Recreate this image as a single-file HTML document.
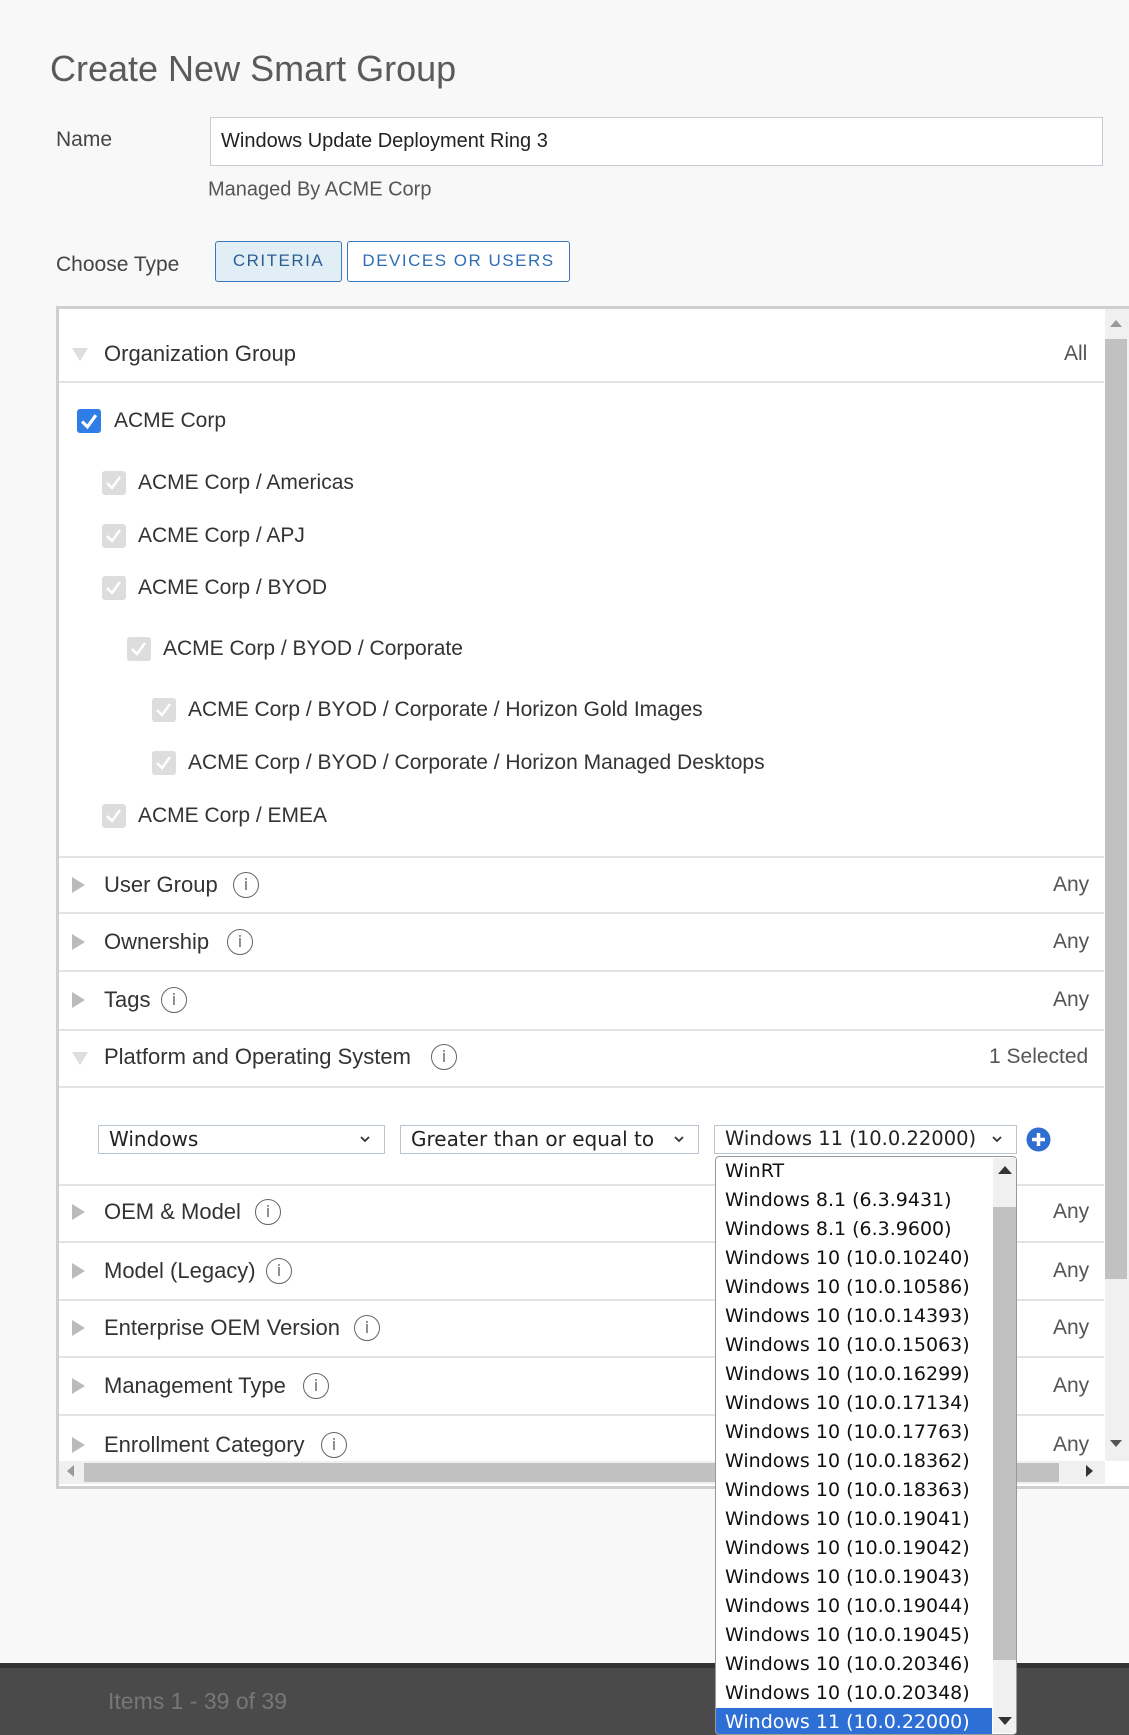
<!DOCTYPE html>
<html><head><style>
*{box-sizing:border-box;margin:0;padding:0}
body{width:1129px;height:1735px;background:#f8f8f8;font-family:"Liberation Sans",sans-serif;color:#333;position:relative;overflow:hidden}
.a{position:absolute;white-space:nowrap}
.lbl{font-size:21px;color:#444;transform:translateY(-50%)}
.row{font-size:21px;color:#333;transform:translateY(-50%)}
.hd{font-size:22px;color:#333;transform:translateY(-50%)}
.any{font-size:21px;color:#555;transform:translateY(-50%);right:0}
.sep{position:absolute;left:59px;width:1045px;height:2px;background:#e3e3e3}
.cb{position:absolute;width:24px;height:24px;background:#ddd;border-radius:3px}
.cb svg{position:absolute;left:3px;top:3px}
.tri{position:absolute;width:0;height:0;border-top:8px solid transparent;border-bottom:8px solid transparent;border-left:13px solid #bbb}
.info{position:absolute;width:26px;height:26px;border:1.5px solid #666;border-radius:50%;font-size:16px;text-align:center;line-height:23px;color:#666;font-family:"DejaVu Sans",sans-serif}
.sel{position:absolute;height:29px;border:1.5px solid #b8c4d0;background:#fff;font-size:20px;line-height:26px;padding-left:10px;color:#222;font-family:"DejaVu Sans",sans-serif}
.sel svg{position:absolute;right:14px;top:10px}
.dd div{height:29px;line-height:29px;padding-left:9px;font-family:"DejaVu Sans",sans-serif;font-size:19px;color:#111}
</style></head><body>
<div class="a" style="left:50px;top:48px;font-size:36px;color:#5a5a5a">Create New Smart Group</div>
<div class="a lbl" style="left:56px;top:140px">Name</div>
<div class="a" style="left:210px;top:117px;width:893px;height:49px;border:1.5px solid #c6ccd4;background:#fff;font-size:20px;line-height:46px;padding-left:10px;color:#222">Windows Update Deployment Ring 3</div>
<div class="a lbl" style="left:208px;top:190px;color:#555;font-size:20px">Managed By ACME Corp</div>
<div class="a lbl" style="left:56px;top:265px">Choose Type</div>
<div class="a" style="left:215px;top:241px;width:127px;height:41px;border:1.5px solid #3a78c2;border-radius:3px;background:#e1eef6;color:#2b5e93;font-size:17px;letter-spacing:1.5px;text-align:center;line-height:38px">CRITERIA</div>
<div class="a" style="left:347px;top:241px;width:223px;height:41px;border:1.5px solid #3a78c2;border-radius:3px;background:#fff;color:#2f6db5;font-size:17px;letter-spacing:1.5px;text-align:center;line-height:38px">DEVICES OR USERS</div>
<!-- panel -->
<div class="a" style="left:56px;top:306px;width:1073px;height:1183px;border:3px solid #cfcfcf;border-right:none;background:#fff"></div>
<div class="a" style="left:1105px;top:309px;width:24px;height:1152px;background:#f0f0f0"></div>
<div class="a" style="left:1105px;top:339px;width:22px;height:940px;background:#c1c1c1"></div>
<div class="a" style="left:1110px;top:320px;border-left:6px solid transparent;border-right:6px solid transparent;border-bottom:7px solid #999;width:0"></div>
<div class="a" style="left:1110px;top:1440px;border-left:6px solid transparent;border-right:6px solid transparent;border-top:7px solid #555;width:0"></div>
<div class="a" style="left:59px;top:1461px;width:1046px;height:23px;background:#f0f0f0"></div>
<div class="a" style="left:84px;top:1463px;width:975px;height:19px;background:#c1c1c1"></div>
<div class="a" style="left:67px;top:1465px;border-top:6px solid transparent;border-bottom:6px solid transparent;border-right:7px solid #999;width:0"></div>
<div class="a" style="left:1086px;top:1465px;border-top:6px solid transparent;border-bottom:6px solid transparent;border-left:7px solid #333;width:0"></div>

<div class="a" style="left:72px;top:348px;border-left:8px solid transparent;border-right:8px solid transparent;border-top:13px solid #ddd;width:0"></div>
<div class="a hd" style="left:104px;top:354px">Organization Group</div>
<div class="a any" style="left:1064px;top:354px">All</div>
<div class="sep" style="top:381px"></div>
<div class="cb" style="left:77px;top:409px;background:#2f7ee8"><svg width="18" height="18" viewBox="0 0 17 17"><path d="M2 9 L7 14 L15 3" stroke="#fff" stroke-width="3" fill="none"/></svg></div>
<div class="a row" style="left:114px;top:421px">ACME Corp</div>

<div class="cb" style="left:102px;top:471px"><svg width="18" height="18"><path d="M2 9 L7 14 L15 3" stroke="#fff" stroke-width="2.5" fill="none"/></svg></div>
<div class="a row" style="left:138px;top:483px">ACME Corp / Americas</div>
<div class="cb" style="left:102px;top:524px"><svg width="18" height="18"><path d="M2 9 L7 14 L15 3" stroke="#fff" stroke-width="2.5" fill="none"/></svg></div>
<div class="a row" style="left:138px;top:536px">ACME Corp / APJ</div>
<div class="cb" style="left:102px;top:576px"><svg width="18" height="18"><path d="M2 9 L7 14 L15 3" stroke="#fff" stroke-width="2.5" fill="none"/></svg></div>
<div class="a row" style="left:138px;top:588px">ACME Corp / BYOD</div>
<div class="cb" style="left:127px;top:637px"><svg width="18" height="18"><path d="M2 9 L7 14 L15 3" stroke="#fff" stroke-width="2.5" fill="none"/></svg></div>
<div class="a row" style="left:163px;top:649px">ACME Corp / BYOD / Corporate</div>
<div class="cb" style="left:152px;top:698px"><svg width="18" height="18"><path d="M2 9 L7 14 L15 3" stroke="#fff" stroke-width="2.5" fill="none"/></svg></div>
<div class="a row" style="left:188px;top:710px">ACME Corp / BYOD / Corporate / Horizon Gold Images</div>
<div class="cb" style="left:152px;top:751px"><svg width="18" height="18"><path d="M2 9 L7 14 L15 3" stroke="#fff" stroke-width="2.5" fill="none"/></svg></div>
<div class="a row" style="left:188px;top:763px">ACME Corp / BYOD / Corporate / Horizon Managed Desktops</div>
<div class="cb" style="left:102px;top:804px"><svg width="18" height="18"><path d="M2 9 L7 14 L15 3" stroke="#fff" stroke-width="2.5" fill="none"/></svg></div>
<div class="a row" style="left:138px;top:816px">ACME Corp / EMEA</div>
<div class="sep" style="top:856px"></div>

<div class="tri" style="left:72px;top:877px"></div><div class="a hd" style="left:104px;top:885px">User Group</div><div class="info" style="left:233px;top:872px">i</div><div class="a any" style="left:1053px;top:885px">Any</div>
<div class="sep" style="top:912px"></div>
<div class="tri" style="left:72px;top:934px"></div><div class="a hd" style="left:104px;top:942px">Ownership</div><div class="info" style="left:227px;top:929px">i</div><div class="a any" style="left:1053px;top:942px">Any</div>
<div class="sep" style="top:970px"></div>
<div class="tri" style="left:72px;top:992px"></div><div class="a hd" style="left:104px;top:1000px">Tags</div><div class="info" style="left:161px;top:987px">i</div><div class="a any" style="left:1053px;top:1000px">Any</div>
<div class="sep" style="top:1029px"></div>
<div class="a" style="left:72px;top:1052px;border-left:8px solid transparent;border-right:8px solid transparent;border-top:13px solid #ddd;width:0"></div>
<div class="a hd" style="left:104px;top:1057px">Platform and Operating System</div><div class="info" style="left:431px;top:1044px">i</div><div class="a any" style="left:989px;top:1057px">1 Selected</div>
<div class="sep" style="top:1086px"></div>

<div class="sel" style="left:98px;top:1125px;width:287px">Windows<svg width="10" height="7"><path d="M1 1l4 4 4-4" stroke="#333" stroke-width="1.8" fill="none"/></svg></div>
<div class="sel" style="left:400px;top:1125px;width:299px">Greater than or equal to<svg width="10" height="7"><path d="M1 1l4 4 4-4" stroke="#333" stroke-width="1.8" fill="none"/></svg></div>
<div class="sel" style="left:714px;top:1125px;width:303px;font-size:19.5px">Windows 11 (10.0.22000)<svg width="10" height="7"><path d="M1 1l4 4 4-4" stroke="#333" stroke-width="1.8" fill="none"/></svg></div>
<svg class="a" style="left:1026px;top:1127px" width="25" height="25"><circle cx="12.5" cy="12.5" r="12" fill="#2f6fd0"/><path d="M12.5 6v13M6 12.5h13" stroke="#fff" stroke-width="3.5"/></svg>
<div class="sep" style="top:1184px"></div>

<div class="tri" style="left:72px;top:1204px"></div><div class="a hd" style="left:104px;top:1212px">OEM &amp; Model</div><div class="info" style="left:255px;top:1199px">i</div><div class="a any" style="left:1053px;top:1212px">Any</div>
<div class="sep" style="top:1241px"></div>
<div class="tri" style="left:72px;top:1263px"></div><div class="a hd" style="left:104px;top:1271px">Model (Legacy)</div><div class="info" style="left:266px;top:1258px">i</div><div class="a any" style="left:1053px;top:1271px">Any</div>
<div class="sep" style="top:1299px"></div>
<div class="tri" style="left:72px;top:1320px"></div><div class="a hd" style="left:104px;top:1328px">Enterprise OEM Version</div><div class="info" style="left:354px;top:1315px">i</div><div class="a any" style="left:1053px;top:1328px">Any</div>
<div class="sep" style="top:1356px"></div>
<div class="tri" style="left:72px;top:1378px"></div><div class="a hd" style="left:104px;top:1386px">Management Type</div><div class="info" style="left:303px;top:1373px">i</div><div class="a any" style="left:1053px;top:1386px">Any</div>
<div class="sep" style="top:1414px"></div>
<div class="tri" style="left:72px;top:1437px"></div><div class="a hd" style="left:104px;top:1445px">Enrollment Category</div><div class="info" style="left:321px;top:1432px">i</div><div class="a any" style="left:1053px;top:1445px">Any</div>

<!-- footer -->
<div class="a" style="left:0;top:1663px;width:1129px;height:72px;background:#4a4a4a"></div>
<div class="a" style="left:0;top:1663px;width:1129px;height:5px;background:#333"></div>
<div class="a" style="left:108px;top:1688px;font-size:23px;color:#777">Items 1 - 39 of 39</div>

<!-- dropdown -->
<div class="a dd" style="left:715px;top:1156px;width:302px;height:579px;background:#fff;border:1.5px solid #999;border-radius:4px;overflow:hidden">
<div>WinRT</div><div>Windows 8.1 (6.3.9431)</div><div>Windows 8.1 (6.3.9600)</div><div>Windows 10 (10.0.10240)</div><div>Windows 10 (10.0.10586)</div><div>Windows 10 (10.0.14393)</div><div>Windows 10 (10.0.15063)</div><div>Windows 10 (10.0.16299)</div><div>Windows 10 (10.0.17134)</div><div>Windows 10 (10.0.17763)</div><div>Windows 10 (10.0.18362)</div><div>Windows 10 (10.0.18363)</div><div>Windows 10 (10.0.19041)</div><div>Windows 10 (10.0.19042)</div><div>Windows 10 (10.0.19043)</div><div>Windows 10 (10.0.19044)</div><div>Windows 10 (10.0.19045)</div><div>Windows 10 (10.0.20346)</div><div>Windows 10 (10.0.20348)</div><div style="background:#2e6fd6;color:#fff;margin-right:24px">Windows 11 (10.0.22000)</div>
</div>
<div class="a" style="left:993px;top:1158px;width:23px;height:575px;background:#f0f0f0"></div>
<div class="a" style="left:993px;top:1207px;width:23px;height:453px;background:#c1c1c1"></div>
<div class="a" style="left:998px;top:1166px;border-left:7px solid transparent;border-right:7px solid transparent;border-bottom:8px solid #333;width:0"></div>
<div class="a" style="left:998px;top:1717px;border-left:7px solid transparent;border-right:7px solid transparent;border-top:8px solid #333;width:0"></div>
</body></html>
